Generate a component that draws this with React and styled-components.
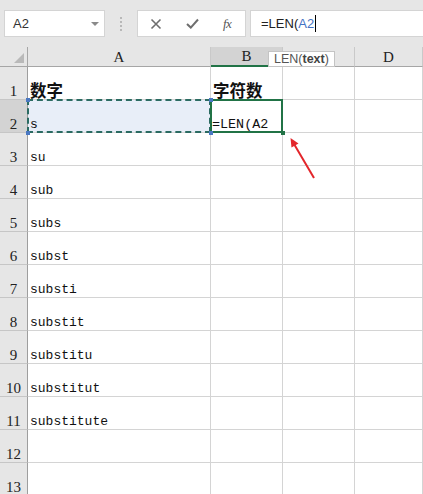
import React from "react";
import styled, { createGlobalStyle, css } from "styled-components";

const Global = createGlobalStyle`
  html, body { margin: 0; padding: 0; background: #fff; overflow: hidden; }
  body { font-family: "Liberation Sans", Arial, sans-serif; }
`;

const Page = styled.div`
  position: relative;
  width: 423px;
  height: 494px;
  overflow: hidden;
  background: #fff;
`;

/* ---------- formula bar ---------- */
const FormulaBar = styled.div`
  display: flex;
  align-items: center;
  height: 47px;
  padding: 0 0 0 4px;
  box-sizing: border-box;
  background: #e6e6e6;
`;

const NameBox = styled.div`
  display: flex;
  align-items: center;
  justify-content: space-between;
  width: 101px;
  height: 27px;
  box-sizing: border-box;
  background: #fff;
  border: 1px solid #d4d4d4;
  padding: 0 5px 0 8px;
  font-size: 13px;
  color: #333;
`;

const DropArrow = styled.span`
  width: 0;
  height: 0;
  border-left: 4px solid transparent;
  border-right: 4px solid transparent;
  border-top: 4px solid #8a8a8a;
`;

const Grip = styled.div`
  width: 16px;
  margin: 0 0 0 8px;
  height: 14px;
  display: flex;
  justify-content: center;
  &::before {
    content: "";
    width: 2px;
    height: 14px;
    background: repeating-linear-gradient(to bottom, #b8b8b8 0 2px, transparent 2px 4px);
  }
`;

const FuncBox = styled.div`
  display: flex;
  align-items: center;
  gap: 24px;
  margin-left: 8px;
  width: 109px;
  height: 27px;
  box-sizing: border-box;
  background: #fff;
  border: 1px solid #d4d4d4;
  padding: 0 0 0 12px;
`;

const FxLabel = styled.span`
  font-family: "Liberation Serif", "Times New Roman", serif;
  font-style: italic;
  font-size: 13px;
  color: #555;
  letter-spacing: -0.5px;
`;

const FormulaInput = styled.div`
  flex: 1;
  display: flex;
  align-items: center;
  margin-left: 4px;
  height: 27px;
  box-sizing: border-box;
  background: #fff;
  border: 1px solid #d4d4d4;
  border-right: none;
  padding-left: 10px;
  font-size: 13px;
  color: #222;
`;

const RefText = styled.span`
  color: #4472c4;
`;

const Caret = styled.span`
  display: inline-block;
  width: 1px;
  height: 17px;
  background: #000;
  margin-left: 1px;
`;

/* ---------- sheet grid ---------- */
const Sheet = styled.div`
  display: grid;
  grid-template-columns: 28px 183px 72px 72px 1fr;
  grid-auto-rows: 33px;
  grid-template-rows: 20px;
`;

const HeaderCell = styled.div`
  box-sizing: border-box;
  background: ${(p) => (p.$active ? "#d3d3d3" : "#e6e6e6")};
  border-right: 1px solid #c9c9c9;
  border-bottom: ${(p) => (p.$active ? "2px solid #217346" : "1px solid #a6a6a6")};
  display: flex;
  align-items: center;
  justify-content: center;
  font-family: "Liberation Serif", "Times New Roman", serif;
  font-size: 15px;
  color: #222;
  padding-top: 1px;
`;

const Corner = styled.div`
  box-sizing: border-box;
  background: #e6e6e6;
  border-right: 1px solid #a6a6a6;
  border-bottom: 1px solid #a6a6a6;
  display: flex;
  align-items: flex-end;
  justify-content: flex-end;
  padding: 0 3px 3px 0;
  &::after {
    content: "";
    width: 0;
    height: 0;
    border-left: 10px solid transparent;
    border-bottom: 10px solid #b9b9b9;
  }
`;

const RowHead = styled.div`
  box-sizing: border-box;
  background: ${(p) => (p.$active ? "#d3d3d3" : "#e6e6e6")};
  border-right: 1px solid #9e9e9e;
  border-bottom: 1px solid #c6c6c6;
  display: flex;
  align-items: flex-end;
  justify-content: center;
  padding-bottom: 0;
  font-family: "Liberation Serif", "Times New Roman", serif;
  font-size: 15px;
  line-height: 15px;
  color: #222;
`;

const Cell = styled.div`
  position: relative;
  box-sizing: border-box;
  border-right: 1px solid #d4d4d4;
  border-bottom: 1px solid #d4d4d4;
  display: flex;
  align-items: flex-end;
  padding: 0 0 0 2px;
  white-space: nowrap;
  font-family: "Liberation Mono", "Noto Sans CJK SC", monospace;
  font-size: 13px;
  line-height: 15px;
  color: #111;
  background: ${(p) => (p.$ref ? "#e8eef8" : "#fff")};
  ${(p) =>
    p.$title &&
    css`
      font-family: "Noto Sans CJK SC", sans-serif;
      font-weight: 700;
      font-size: 16.5px;
      line-height: 18px;
      padding-bottom: 0;
    `}
  ${(p) =>
    p.$edit &&
    css`
      font-size: 13.4px;
      padding-left: 1px;
      padding-bottom: 0;
    `}
  ${(p) =>
    p.$ref &&
    css`
      &::after {
        content: "";
        position: absolute;
        left: -1px;
        top: -1px;
        right: -1px;
        bottom: -1px;
        border: 2px dashed #2b6b62;
        pointer-events: none;
      }
    `}
  ${(p) =>
    p.$active &&
    css`
      &::after {
        content: "";
        position: absolute;
        left: -1px;
        top: -1px;
        right: -1px;
        bottom: -1px;
        border: 2px solid #217346;
        pointer-events: none;
      }
    `}
`;

const Handle = styled.span`
  position: absolute;
  width: 4px;
  height: 4px;
  background: ${(p) => p.$color};
  z-index: 2;
  ${(p) => (p.$top ? "top: -2px;" : "bottom: -3px;")}
  ${(p) => (p.$left ? "left: -2px;" : "right: -3px;")}
`;

const Tooltip = styled.div`
  position: absolute;
  left: 268px;
  top: 51px;
  height: 16px;
  box-sizing: border-box;
  padding: 0 5px;
  background: #fff;
  border: 1px solid #c4c4c4;
  display: flex;
  align-items: center;
  font-family: "Liberation Sans", Arial, sans-serif;
  font-size: 12.5px;
  color: #555;
  b { color: #444; }
`;

const ArrowLayer = styled.svg`
  position: absolute;
  left: 0;
  top: 0;
  pointer-events: none;
`;

const colA = ["数字", "s", "su", "sub", "subs", "subst", "substi", "substit", "substitu", "substitut", "substitute", "", ""];
const colB = ["字符数", "=LEN(A2"];

function CrossIcon() {
  return (
    <svg width="12" height="12" viewBox="0 0 12 12">
      <path d="M1.5 1.5 L10.5 10.5 M10.5 1.5 L1.5 10.5" stroke="#6e6e6e" strokeWidth="1.6" fill="none" />
    </svg>
  );
}

function CheckIcon() {
  return (
    <svg width="13" height="11" viewBox="0 0 13 11">
      <path d="M1 6 L4.8 9.6 L12 1.5" stroke="#6e6e6e" strokeWidth="2" fill="none" />
    </svg>
  );
}

export default function App() {
  return (
    <Page>
      <Global />
      <FormulaBar>
        <NameBox>
          <span>A2</span>
          <DropArrow />
        </NameBox>
        <Grip />
        <FuncBox>
          <CrossIcon />
          <CheckIcon />
          <FxLabel>fx</FxLabel>
        </FuncBox>
        <FormulaInput>
          <span>=LEN(</span>
          <RefText>A2</RefText>
          <Caret />
        </FormulaInput>
      </FormulaBar>

      <Sheet>
        <Corner />
        <HeaderCell>A</HeaderCell>
        <HeaderCell $active>B</HeaderCell>
        <HeaderCell />
        <HeaderCell>D</HeaderCell>
        {colA.map((a, i) => {
          const r = i + 1;
          return (
            <React.Fragment key={r}>
              <RowHead $active={r === 2}>{r}</RowHead>
              <Cell $title={r === 1} $ref={r === 2}>
                {a}
                {r === 2 && (
                  <>
                    <Handle $color="#4a78c2" $top $left />
                    <Handle $color="#4a78c2" $top />
                    <Handle $color="#4a78c2" $left />
                    <Handle $color="#4a78c2" />
                  </>
                )}
              </Cell>
              <Cell $title={r === 1} $edit={r === 2} $active={r === 2}>
                {colB[i] || ""}
                {r === 2 && <Handle $color="#217346" />}
              </Cell>
              <Cell />
              <Cell />
            </React.Fragment>
          );
        })}
      </Sheet>

      <Tooltip>
        LEN(<b>text</b>)
      </Tooltip>

      <ArrowLayer width="423" height="494">
        <line x1="314" y1="178" x2="294" y2="144" stroke="#e3262b" strokeWidth="2" />
        <path d="M290.5 138 L298.5 143.5 L291.5 147.5 Z" fill="#e3262b" />
      </ArrowLayer>
    </Page>
  );
}
